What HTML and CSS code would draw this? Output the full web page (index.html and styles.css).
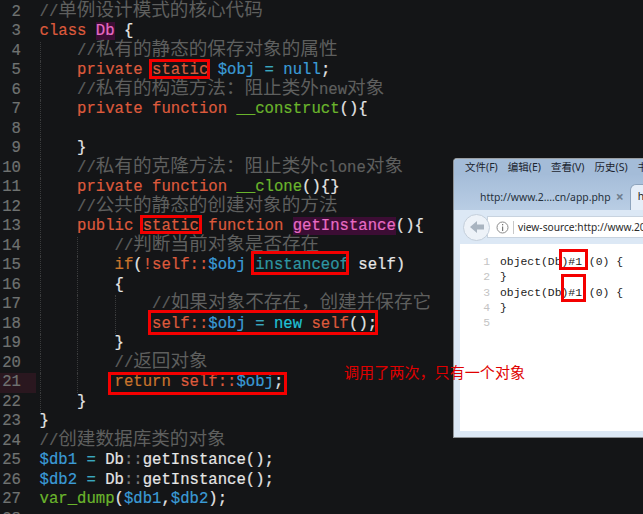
FILE: index.html
```html
<!DOCTYPE html>
<html lang="zh">
<head>
<meta charset="utf-8">
<title>单例设计模式</title>
<link rel="stylesheet" href="styles.css">
</head>
<body>
<main class="stage">
  <section class="code">
    <div class="ln"><span class="no">2</span><span class="tx c">//<b>单例设计模式的核心代码</b></span></div>
    <div class="ln"><span class="no">3</span><span class="tx"><span class="k">class</span> <span class="cls">Db</span> <span class="w">{</span></span></div>
    <div class="ln"><span class="no">4</span><i class="ind"></i><span class="tx c">//<b>私有的静态的保存对象的属性</b></span></div>
    <div class="ln"><span class="no">5</span><i class="ind"></i><span class="tx"><span class="k">private static</span> <span class="v">$obj</span> <span class="op">=</span> <span class="v">null</span><span class="w">;</span></span></div>
    <div class="ln"><span class="no">6</span><i class="ind"></i><span class="tx c">//<b>私有的构造方法&#xFF1A;阻止类外</b>new<b>对象</b></span></div>
    <div class="ln"><span class="no">7</span><i class="ind"></i><span class="tx"><span class="k">private function</span> <span class="f">__construct</span><span class="w">(){</span></span></div>
    <div class="ln"><span class="no">8</span><i class="ind"></i><span class="tx"></span></div>
    <div class="ln"><span class="no">9</span><i class="ind"></i><span class="tx w">}</span></div>
    <div class="ln"><span class="no">10</span><i class="ind"></i><span class="tx c">//<b>私有的克隆方法&#xFF1A;阻止类外</b>clone<b>对象</b></span></div>
    <div class="ln"><span class="no">11</span><i class="ind"></i><span class="tx"><span class="k">private function</span> <span class="f">__clone</span><span class="w">(){}</span></span></div>
    <div class="ln"><span class="no">12</span><i class="ind"></i><span class="tx c">//<b>公共的静态的创建对象的方法</b></span></div>
    <div class="ln"><span class="no">13</span><i class="ind"></i><span class="tx"><span class="k">public static function</span> <span class="fn">getInstance</span><span class="w">(){</span></span></div>
    <div class="ln"><span class="no">14</span><i class="ind"></i><i class="ind"></i><span class="tx c">//<b>判断当前对象是否存在</b></span></div>
    <div class="ln"><span class="no">15</span><i class="ind"></i><i class="ind"></i><span class="tx"><span class="o">if</span><span class="w">(</span><span class="k">!self::</span><span class="v">$obj</span> <span class="t">instanceof</span> <span class="w">self)</span></span></div>
    <div class="ln"><span class="no">16</span><i class="ind"></i><i class="ind"></i><span class="tx w">{</span></div>
    <div class="ln"><span class="no">17</span><i class="ind"></i><i class="ind"></i><i class="ind"></i><span class="tx c">//<b>如果对象不存在&#xFF0C;创建并保存它</b></span></div>
    <div class="ln"><span class="no">18</span><i class="ind"></i><i class="ind"></i><i class="ind"></i><span class="tx"><span class="k">self::</span><span class="v">$obj</span> <span class="op">=</span> <span class="n">new</span> <span class="k">self</span><span class="w">();</span></span></div>
    <div class="ln"><span class="no">19</span><i class="ind"></i><i class="ind"></i><span class="tx w">}</span></div>
    <div class="ln"><span class="no">20</span><i class="ind"></i><i class="ind"></i><span class="tx c">//<b>返回对象</b></span></div>
    <div class="ln"><span class="no mark">21</span><i class="ind"></i><i class="ind"></i><span class="tx"><span class="o">return</span> <span class="k">self::</span><span class="v">$obj</span><span class="w">;</span></span></div>
    <div class="ln"><span class="no">22</span><i class="ind"></i><span class="tx w">}</span></div>
    <div class="ln"><span class="no">23</span><span class="tx w">}</span></div>
    <div class="ln"><span class="no">24</span><span class="tx c">//<b>创建数据库类的对象</b></span></div>
    <div class="ln"><span class="no">25</span><span class="tx"><span class="v">$db1</span> <span class="op">=</span> <span class="w">Db</span><span class="g">::</span><span class="w">getInstance();</span></span></div>
    <div class="ln"><span class="no">26</span><span class="tx"><span class="v">$db2</span> <span class="op">=</span> <span class="w">Db</span><span class="g">::</span><span class="w">getInstance();</span></span></div>
    <div class="ln"><span class="no">27</span><span class="tx"><span class="f">var_dump</span><span class="w">(</span><span class="v">$db1</span><span class="w">,</span><span class="v">$db2</span><span class="w">);</span></span></div>
    <div class="ln"><span class="no">28</span><span class="tx"></span></div>
  </section>

  <section class="win">
    <nav class="menu"><span>文件(F)</span><span>编辑(E)</span><span>查看(V)</span><span>历史(S)</span><span>书签(B)</span></nav>
    <div class="tabs">
      <span class="tab">http://www.2....cn/app.php</span><span class="close">×</span>
      <span class="active">h</span>
    </div>
    <div class="bar">
      <span class="back">
        <svg width="16" height="14" viewBox="0 0 16 14"><path d="M1 7 L8 1 V4.5 H15 V9.5 H8 V13 Z" fill="#a9b4c0"/></svg>
      </span>
      <div class="url">
        <svg class="info" width="13" height="13" viewBox="0 0 13 13"><circle cx="6.5" cy="6.5" r="5.5" fill="none" stroke="#8a8a8a"/><rect x="6" y="5.5" width="1.2" height="4.5" fill="#777"/><rect x="6" y="3" width="1.2" height="1.3" fill="#777"/></svg>
        <span class="url-text">view-source:http://www.2017.cn/app.php</span>
      </div>
    </div>
    <div class="page">
      <div class="sl"><span class="sn">1</span>object(Db)#1 (0) {</div>
      <div class="sl"><span class="sn">2</span>}</div>
      <div class="sl"><span class="sn">3</span>object(Db)#1 (0) {</div>
      <div class="sl"><span class="sn">4</span>}</div>
      <div class="sl"><span class="sn">5</span></div>
    </div>
  </section>

  <div class="box b1"></div>
  <div class="box b2"></div>
  <div class="box b3"></div>
  <div class="box b4"></div>
  <div class="box b5"></div>
  <div class="box b6"></div>
  <div class="box b7"></div>
  <p class="note">调用了两次&#xFF0C;只有一个对象</p>
</main>
</body>
</html>
```
FILE: styles.css
```css
html, body { margin: 0; padding: 0; background: #141517; }
.stage { position: relative; width: 643px; height: 514px; overflow: hidden; background: #141517; }

.code { padding-top: 2.5px; font-family: "Liberation Mono", "Noto Sans CJK SC", monospace; font-size: 15.63px; color: #e8e8e8; -webkit-text-stroke: .2px; }
.ln { display: flex; height: 19.52px; line-height: 19.52px; white-space: pre; }
.no { flex: none; width: 21px; margin-right: 18.5px; text-align: right; color: #6f7271; }
.no.mark { width: 35.5px; margin-right: 4px; padding-right: 14.5px; box-sizing: border-box; background: #2a171f; }
.ind { flex: none; width: 37.5px; box-sizing: border-box; border-left: 1px dotted #3a3b3c; }
.tx { flex: none; }
.tx b { font-family: "Noto Sans CJK SC", sans-serif; font-weight: 400; font-size: 18.6px; line-height: 0; -webkit-text-stroke: 0; }
.c { color: #5e5f5e; }
.k { color: #dd5a3c; }
.o { color: #c9742c; }
.v { color: #3b9bd6; }
.op { color: #3aa7bf; }
.w { color: #e6e6e6; }
.g { color: #7a7a7a; }
.f { color: #6ab42c; }
.t { color: #2e97a3; }
.n { color: #1fc1d6; }
.cls, .fn { color: #e86bc4; background: #3c0d34; }

.win { position: absolute; left: 453px; top: 158px; width: 200px; height: 280px; box-sizing: border-box; display: flex; flex-direction: column; overflow: hidden; background: #dce8f5; border-left: 1px solid #8e9296; border-top: 1px solid #9a9ea2; border-bottom: 1px solid #8e9296; border-top-left-radius: 4px; font-family: "Noto Sans", "Noto Sans CJK SC", sans-serif; color: #222; }
.menu { flex: none; height: 16px; display: flex; gap: 10px; padding-left: 11px; align-items: center; font-size: 10.5px; line-height: 16px; background: #a4bcd8; white-space: nowrap; color: #1c2530; }
.tabs { flex: none; height: 35px; display: flex; align-items: flex-end; background: linear-gradient(#a5bdd9, #b9cde4); white-space: nowrap; position: relative; }
.tab { padding: 0 0 5px 26px; font-size: 10.4px; line-height: 16px; color: #24303c; }
.close { padding: 0 0 5px 5px; font-size: 14px; line-height: 16px; font-weight: 700; color: #6d7c8e; }
.active { margin-left: 6px; padding: 3px 0 5px 7px; width: 30px; height: 26px; box-sizing: border-box; background: #e6eef8; border: 1px solid #8ea4bd; border-bottom: 0; border-top-left-radius: 6px; font-size: 10.4px; line-height: 16px; }
.bar { flex: none; height: 34px; display: flex; align-items: center; padding-left: 9px; background: #dce8f5; }
.back { flex: none; width: 25px; height: 25px; border: 1px solid #c4cfdb; border-radius: 50%; background: #edf2f8; display: flex; align-items: center; justify-content: center; z-index: 1; }
.url { flex: none; margin-left: -3px; width: 190px; height: 22px; display: flex; align-items: center; background: #fff; border: 1px solid #c8d3df; box-sizing: border-box; white-space: nowrap; }
.info { flex: none; margin-left: 8px; padding-right: 4px; border-right: 1px solid #c8c8c8; margin-right: 4px; }
.url-text { font-size: 10.2px; color: #2a2a2a; }
.page { flex: 1; margin: 0 0 6px 6px; background: #fff; padding-top: 11px; font-family: "Liberation Mono", monospace; font-size: 11.4px; color: #222; }
.sl { height: 15.3px; line-height: 15.3px; white-space: pre; }
.sn { display: inline-block; width: 30px; padding-right: 10px; text-align: right; color: #c4c4c4; }

.box { position: absolute; box-sizing: border-box; border: 3px solid #f40000; }
.b1 { left: 149px; top: 59px; width: 61px; height: 20px; }
.b2 { left: 140px; top: 215px; width: 62px; height: 19px; }
.b3 { left: 251px; top: 251px; width: 98px; height: 24px; }
.b4 { left: 148px; top: 310px; width: 230px; height: 25px; }
.b5 { left: 108px; top: 372px; width: 179px; height: 23px; }
.b6 { left: 559px; top: 249px; width: 29px; height: 21px; }
.b7 { left: 561px; top: 274px; width: 25px; height: 28px; }

.note { position: absolute; left: 344px; top: 360px; margin: 0; font-family: "Noto Sans CJK SC", sans-serif; font-size: 15.1px; line-height: 22px; color: #e00000; white-space: nowrap; }
```
